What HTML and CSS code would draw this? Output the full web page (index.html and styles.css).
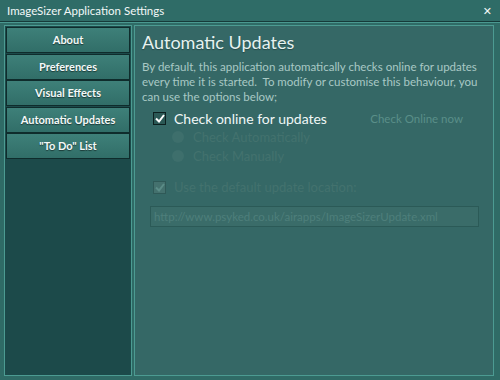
FILE: index.html
```html
<!DOCTYPE html>
<html lang="en">
<head>
    <meta charset="UTF-8">
    <title>ImageSizer Application Settings</title>
    <link rel="stylesheet" href="styles.css">
</head>
<body>
    <div class="window">
        <div class="titlebar">
            <span class="title">ImageSizer Application Settings</span>
            <span class="close">&#x2715;</span>
        </div>
        <div class="frame">
            <div class="sidebar">
                <div class="nav-btn">About</div>
                <div class="nav-btn">Preferences</div>
                <div class="nav-btn">Visual Effects</div>
                <div class="nav-btn">Automatic Updates</div>
                <div class="nav-btn">"To Do" List</div>
            </div>
            <div class="panel">
                <h1>Automatic Updates</h1>
                <p class="intro">By default, this application automatically checks online for updates every time it is started.&nbsp; To modify or customise this behaviour, you can use the options below;</p>

                <div class="row main-row">
                    <span class="check on">
                        <svg width="10" height="9" viewBox="0 0 10 9"><path d="M1 4.5 L4 7.5 L9 1" fill="none" stroke="#fff" stroke-width="2"/></svg>
                    </span>
                    <span class="label">Check online for updates</span>
                    <span class="link-dim">Check Online now</span>
                </div>

                <div class="row radio-row">
                    <span class="radio"></span>
                    <span class="label dim">Check Automatically</span>
                </div>
                <div class="row radio-row">
                    <span class="radio"></span>
                    <span class="label dim">Check Manually</span>
                </div>

                <div class="row default-row">
                    <span class="check off">
                        <svg width="10" height="9" viewBox="0 0 10 9"><path d="M1 4.5 L4 7.5 L9 1" fill="none" stroke="#5b8c87" stroke-width="2"/></svg>
                    </span>
                    <span class="label dim">Use the default update location:</span>
                </div>

                <div class="url-field">http://www.psyked.co.uk/airapps/ImageSizerUpdate.xml</div>
            </div>
        </div>
    </div>
</body>
</html>
```

FILE: styles.css
```css
body {
    margin: 0;
    font-family: Lato, "DejaVu Sans", sans-serif;
    background: #1b3f3e;
}

.window {
    width: 500px;
    height: 380px;
    background: #2f6b66;
    display: flex;
    flex-direction: column;
}

.titlebar {
    height: 21px;
    display: flex;
    justify-content: space-between;
    align-items: center;
    padding: 0 8px 0 7px;
    background: #2f6c67;
    color: #f2f8f7;
    font-size: 11.5px;
    border-bottom: 1px solid #163a39;
}

.close {
    font-size: 11px;
    font-weight: bold;
}

.frame {
    flex: 1;
    display: flex;
    gap: 2px;
    padding: 2px 6px 4px 4px;
    border-top: 1px solid #4a9890;
}

.sidebar {
    width: 124px;
    background: #1c4a4a;
    border: 1px solid #4c9b92;
    padding: 1px 1px;
}

.nav-btn {
    height: 24px;
    line-height: 24px;
    margin-bottom: 0.5px;
    text-align: center;
    color: #f4f9f8;
    font-size: 11px;
    font-weight: bold;
    text-shadow: 0 1px 1px rgba(0, 0, 0, 0.5);
    background: linear-gradient(#3e8079, #316e68);
    border: 1px solid #0f2c2c;
}

.panel {
    flex: 1;
    background: #356866;
    border: 1px solid #4c9b92;
    padding: 5px 14px 0 7px;
}

h1 {
    margin: 0;
    font-weight: normal;
    font-size: 18px;
    line-height: 22px;
    color: #e6f2f0;
    text-shadow: 0 1px 1px rgba(0, 0, 0, 0.3);
}

.intro {
    margin: 6px 0 0;
    font-size: 11.5px;
    line-height: 15px;
    color: #a9c9c5;
}

.row {
    display: flex;
    align-items: center;
}

.main-row {
    margin-top: 5px;
    padding-left: 11px;
    height: 18px;
}

.check {
    width: 11px;
    height: 11px;
    display: flex;
    align-items: center;
    justify-content: center;
    margin-right: 8px;
}

.check.on {
    border: 1px solid #0c2020;
    background: #2b5855;
}

.check.off {
    border: 1px solid #2f5957;
    background: #44716e;
}

.label {
    font-size: 14px;
    color: #f0f7f6;
}

.label.dim {
    color: #43726e;
    font-size: 13px;
}

.link-dim {
    margin-left: auto;
    margin-right: 16px;
    font-size: 11.5px;
    color: #5a8f89;
}

.radio-row {
    padding-left: 30px;
    height: 19.5px;
}

.radio {
    width: 12px;
    height: 12px;
    border-radius: 50%;
    background: #3e6f6c;
    margin-right: 9px;
}

.default-row {
    margin-top: 12px;
    padding-left: 11px;
    height: 18px;
}

.url-field {
    margin-top: 10px;
    margin-left: 8px;
    width: 324px;
    height: 19px;
    line-height: 19px;
    padding-left: 3px;
    border: 1px solid #2b5a57;
    background: #3a6c69;
    color: #4e7f7b;
    font-size: 11.5px;
}
```
